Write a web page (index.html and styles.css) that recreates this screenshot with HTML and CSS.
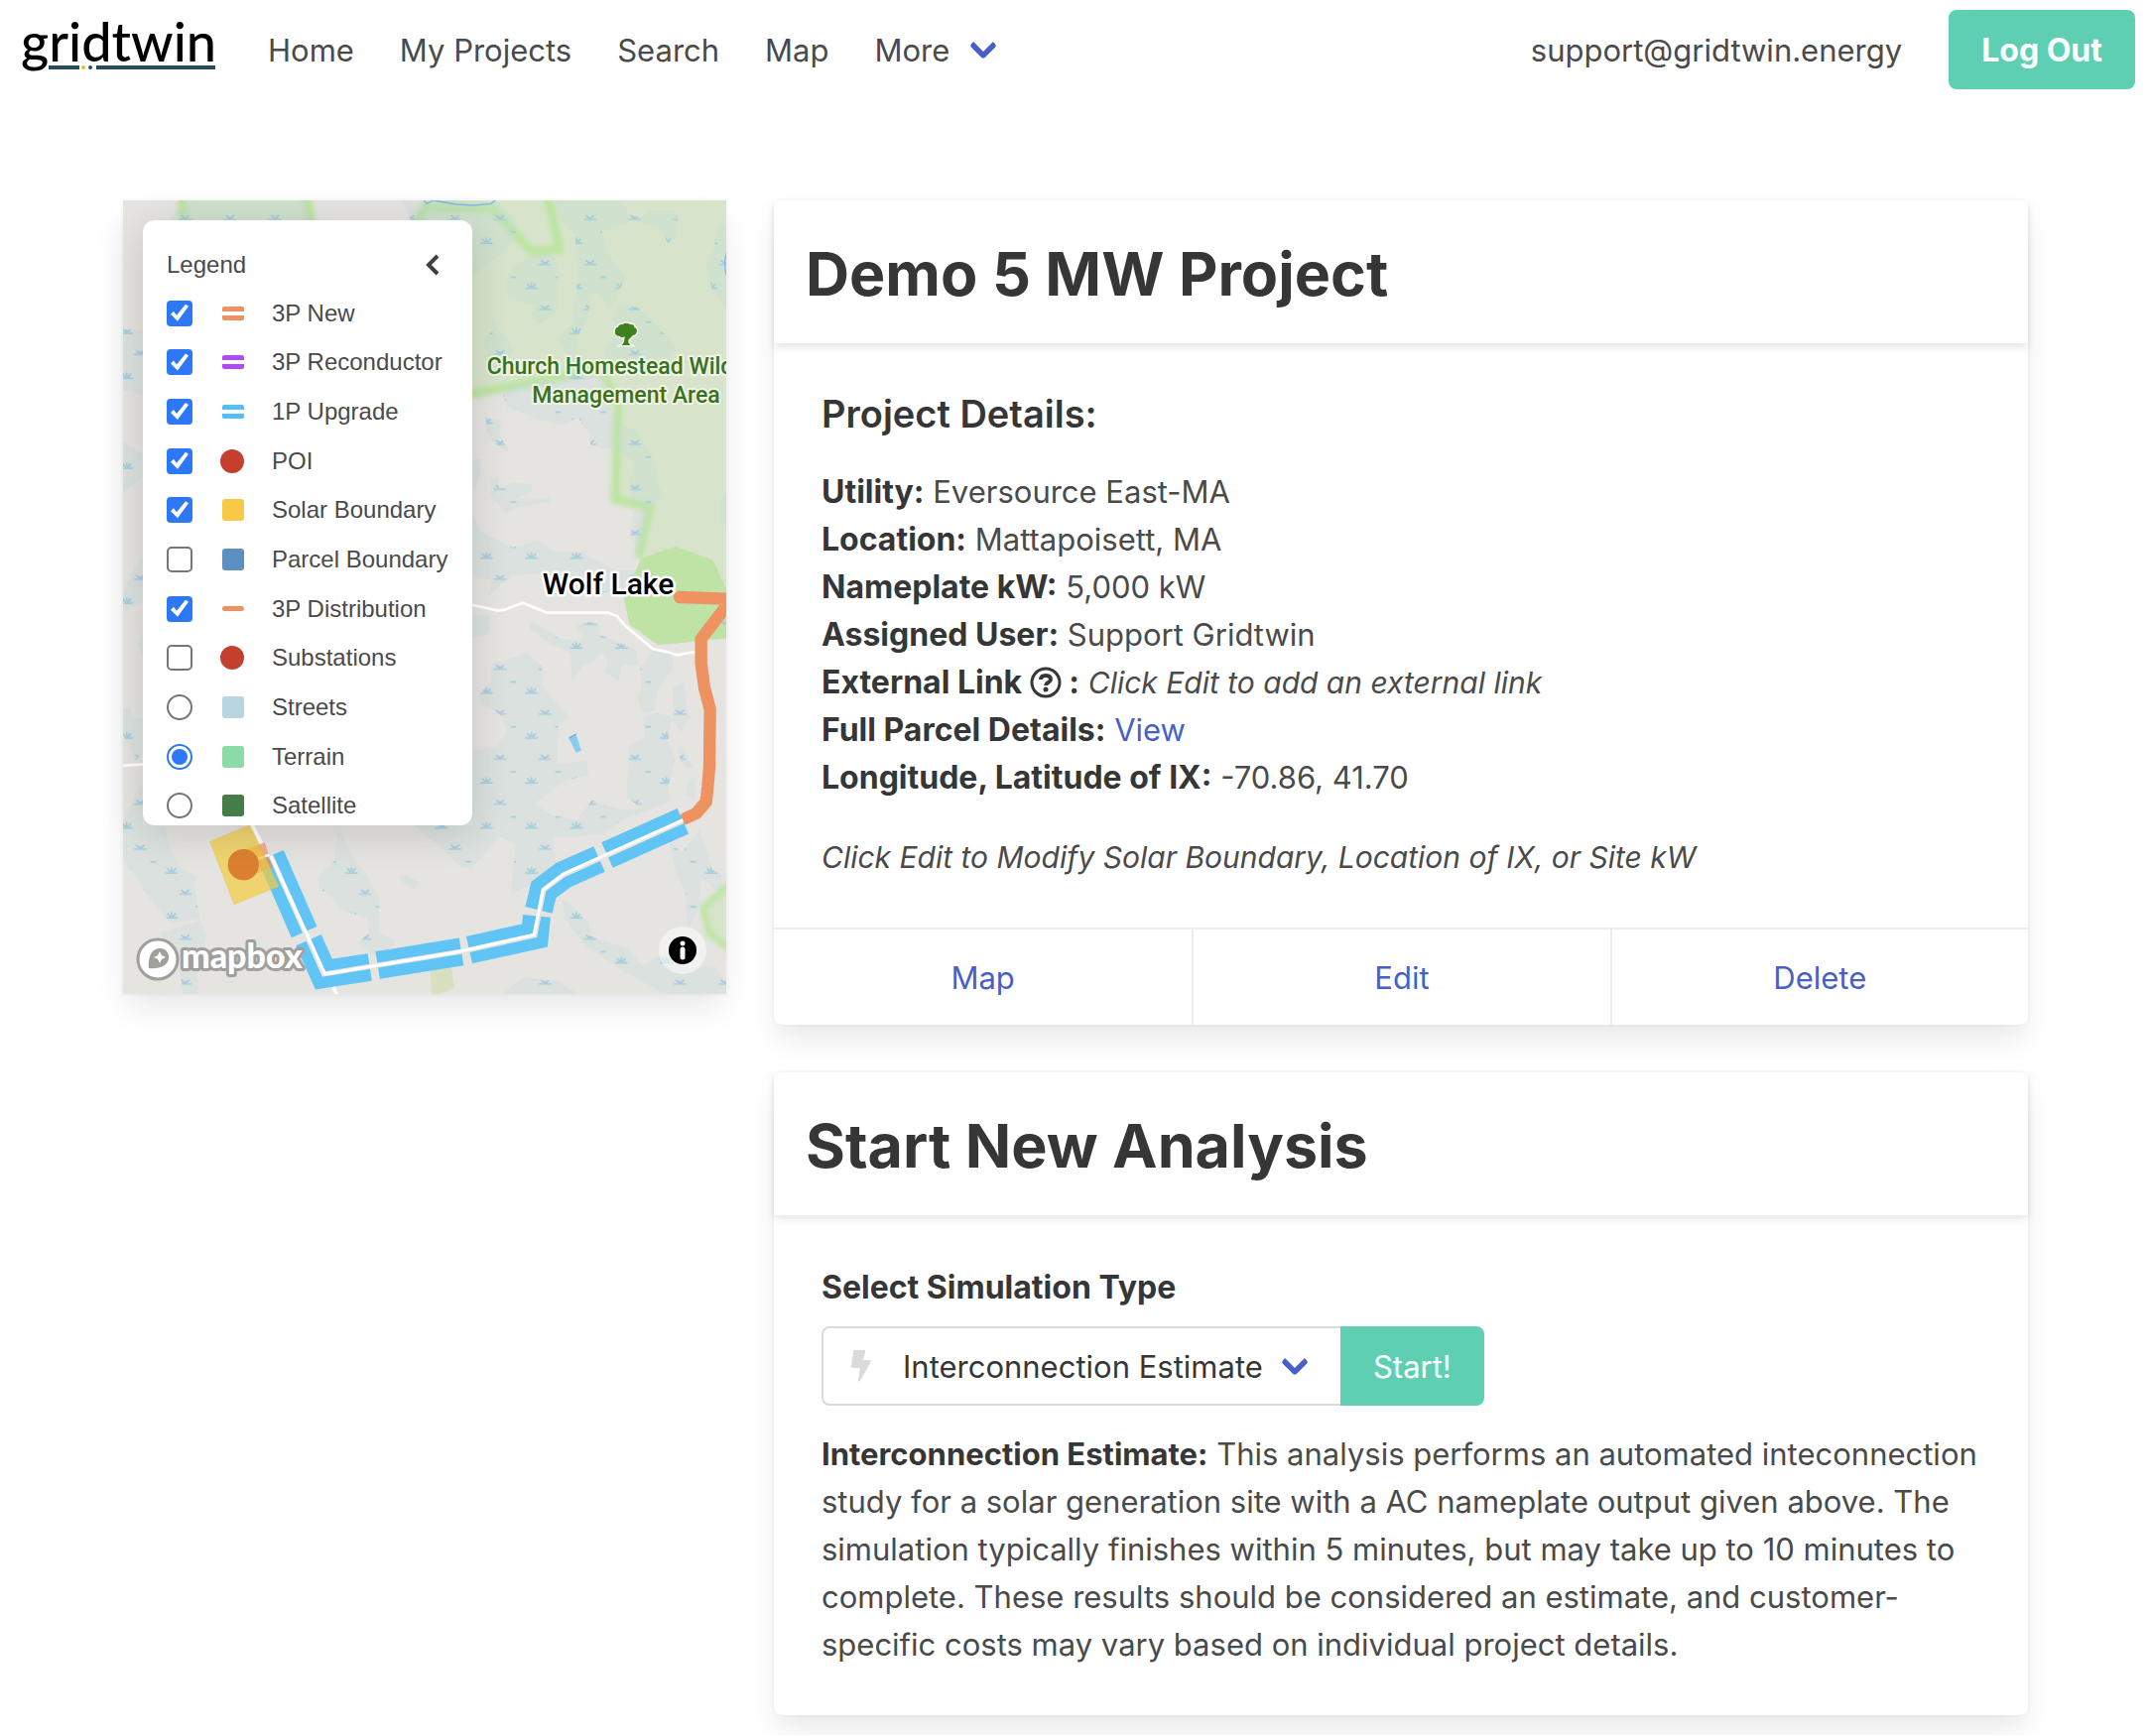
FILE: index.html
```html
<!DOCTYPE html>
<html lang="en">
<head>
<meta charset="utf-8">
<meta name="viewport" content="width=device-width, initial-scale=1">
<title>Demo 5 MW Project - gridtwin</title>
<link rel="stylesheet" href="styles.css">
</head>
<body>
<nav class="navbar" aria-label="Main">
  <a class="brand" href="#" aria-label="gridtwin">
    <svg class="brand-logo" viewBox="0 0 200 60" aria-hidden="true">
      <path d="M27 46h31v4H27zM75 46h120v4H75z" fill="#2b4a5e"/>
      <circle cx="62" cy="48" r="2" fill="#f2b632"/>
      <circle cx="69" cy="48" r="2" fill="#2b4a5e"/>
      <text class="brand-text" x="-1" y="42">gridtwin</text>
    </svg>
  </a>
  <a class="nav-item" href="#">Home</a>
  <a class="nav-item" href="#">My Projects</a>
  <a class="nav-item" href="#">Search</a>
  <a class="nav-item" href="#">Map</a>
  <a class="nav-item nav-more" href="#">More<span class="arrow"></span></a>
  <div class="nav-end">
    <a class="nav-item" href="#">support@gridtwin.energy</a>
    <button class="button button-strong" type="button">Log Out</button>
  </div>
</nav>

<main class="columns">
  <div class="column column-map">
    <section class="map" aria-label="Project map">
      <svg class="map-canvas" viewBox="0 0 608 800" preserveAspectRatio="xMidYMid slice" aria-hidden="true">
        <defs>
          <filter id="soft" x="-10%" y="-10%" width="120%" height="120%"><feGaussianBlur stdDeviation="8"/></filter>
          <pattern id="tufts" width="136" height="136" patternUnits="userSpaceOnUse" x="50" y="50">
            <g fill="none" stroke="#9ccddb" stroke-width="4">
              <path d="M63 44h38M22 116h38M113 82h18"/>
              <path d="M70 31l9 9M94 31l-9 9M82 36v6" stroke="#a3bede"/>
              <path d="M28 102l10 11M54 102l-10 11M41 98v14" stroke="#9cc6dc"/>
            </g>
          </pattern>
          <clipPath id="wet">
            <path d="M48 264V36H120L180 100Q190 160 130 200ZM300 36H500L520 75L560 90L580 66H660L670 95L665 150L640 165L615 120L580 110L540 95L500 110L440 130L460 200L515 270L490 310L475 350L455 360L440 325Q425 310 410 318L395 400L365 450L370 560L300 580L170 590L140 625L155 660L200 680L290 710Q330 722 365 690L405 745V775L440 785H475L480 700L440 560L350 540L340 500L300 455L350 410L365 300L360 140L305 90Z"/>
            <path d="M150 290L170 240Q220 195 290 195L308 230L305 370L270 400L245 410L225 390L240 350L210 345L160 330ZM80 460L105 435L110 390L125 425L150 450L175 490L160 510H100ZM480 380L485 350L550 360L620 430L668 485L640 515H450L455 480L480 440ZM816 110L785 120L780 180L755 240L775 310L816 360Z"/>
            <path d="M490 710L540 730L580 790L605 850L610 900L625 930L585 965L530 945L525 880L540 830L485 790ZM585 970L560 1110L545 1090L525 1050L535 975ZM105 880L125 870L130 910L170 890L225 895L230 915L180 940L280 935L282 948L180 965L150 980L105 930ZM90 695L135 700L130 740L155 790L150 797L110 765L90 730ZM50 820L75 825L70 870L50 905ZM816 920L797 940V1005L816 1020Z"/>
            <path transform="translate(0 1110)" d="M48 -85L170 -25L250 -45L300 -10H380L480 45H545V110H440L400 95L320 70L250 55L170 60L110 110L95 125L110 75L48 60ZM48 185L100 178L98 235L48 245ZM220 205L240 205L310 250L370 260L385 245L360 215L380 200L430 205L438 240L545 285L548 330H500L490 380L450 350L460 320L440 295L415 320L385 330L350 378L345 295L290 270L225 225Z"/>
            <path transform="translate(0 1110)" d="M105 330L215 295L258 335L262 400L340 490L308 510L305 630L395 620L398 665L330 680L235 750L290 785L365 800L410 740L500 770L560 765L517 730L520 580L568 545L565 485L605 475L650 490L640 560L660 620L640 700L645 745L500 800L450 840L380 850H290L300 930L220 1000L165 1020L180 870L130 850L60 930L0 900V830L48 815V590L120 580L155 530L130 480L75 450L70 420L105 380ZM555 340L590 290H655V340L610 400L600 470L560 475L548 430L560 400Z"/>
            <path transform="translate(0 1110)" d="M655 400L690 380L695 460L705 490L680 535L655 500ZM665 590L680 570L715 640H690ZM700 680L725 670L720 740L695 720ZM640 850L680 900L735 830L775 950L800 960L805 1010H780L740 970L735 1060L700 1130L690 1010L665 960ZM320 1040L350 1060L400 1110L405 1150L520 1190L560 1240L640 1200L700 1250L780 1240L816 1290V1326H650L620 1320L510 1260L390 1180L330 1100ZM145 1320L205 1275L310 1290L370 1326H150ZM800 90H820V230L800 200Z"/>
            <path transform="translate(-1050 1830)" d="M42 90L170 100L180 160L215 225L262 250L260 290L275 380L185 390L120 315L70 235L42 200ZM155 420L275 385L295 430L270 520L268 606H225L210 520ZM635 250L680 205L690 120L700 118L735 190L775 240L818 315V425L860 440L862 460L800 490L755 450L785 420L780 375L705 355L670 310L632 285ZM925 96H1140V140L1120 145V190L1095 230L1060 220L1010 165L960 130ZM878 245H900L938 270L920 290L880 260Z"/>
            <path transform="translate(-1050 0)" d="M42 425L102 430V625L60 610L42 615ZM42 765L102 805V870L42 920ZM228 36H595L610 96H170L228 60ZM885 36H1100V96H912ZM1098 820H1125L1110 910L1098 900Z"/>
            <path transform="translate(-1050 960)" d="M70 200L102 150V290L42 320V270ZM102 380L88 420L102 460ZM42 610L65 615L70 640L102 645V750L80 770L42 690ZM42 960L95 840L102 850V966H42ZM1098 20L1140 120V185L1098 110ZM1098 330L1140 340V390L1098 395Z"/>
          </clipPath>
        </defs>
        <rect width="608" height="800" fill="#e5e4e1"/>
        <g transform="translate(336 -12) scale(.33333)">
          <!-- conservation land -->
          <path d="M-825 20H-450L-430 150H-825ZM-90 20L-140 150V660L48 622L440 545L488 660L480 940L585 965L550 1120L600 1240H820V20Z" fill="#d7e4cb"/>
          <path d="M-828 20V150M-452 20L-430 150M-130 120L-95 55L110 62L228 192L312 182L275 20M-60 650L48 622L440 545L488 660L480 940L585 965L550 1115" fill="none" stroke="#bce4a0" stroke-width="26" filter="url(#soft)"/>
          <path d="M840 2090L745 2175L765 2255L840 2310Z" fill="#d7e4cb" stroke="#bce4a0" stroke-width="18" filter="url(#soft)"/>
          <path d="M-82 2325L-20 2320L-6 2417L-50 2436H-75Z" fill="#d9e0bf"/>
          <path d="M560 1118L662 1082L775 1123L830 1240L822 1360L610 1381L523 1318L505 1230Z" fill="#bfe3a4"/>
          <!-- wetlands -->
          <g clip-path="url(#wet)">
            <rect x="-1010" y="36" width="1830" height="2400" fill="#bfdcd8" opacity=".28"/>
            <rect x="-1010" y="36" width="1830" height="2400" fill="url(#tufts)"/>
          </g>
          <path d="M-98 36L-90 46L-70 36L0 48L50 51L105 46L118 36M820 185Q804 230 820 272" fill="none" stroke="#86b3ea" stroke-width="4"/>
          <path d="M340 1662L362 1650L378 1700L362 1706Z" fill="#8accee"/>
          <path d="M340 1662L362 1650" stroke="#789fe0" stroke-width="4"/>
          <!-- roads -->
          <g fill="none" stroke="#fff" stroke-width="8">
            <path d="M0 1250L50 1260L125 1277L150 1273L200 1253L275 1283H460L487 1294L510 1322L595 1393L640 1402L665 1411L710 1403H724M-1010 1745L-945 1742"/>
            <path d="M-625 1910L-450 2260L-360 2440" stroke-width="11"/>
          </g>
          <!-- three-phase line -->
          <path d="M675 1236L822 1241M830 1245L740 1362V1435L750 1510L767 1575L765 1750L760 1810L755 1855L725 1890L692 1905" fill="none" stroke="#ee9262" stroke-width="37" stroke-linecap="round"/>
          <!-- single-phase upgrade -->
          <g fill="none" stroke="#60c4f5" stroke-width="84">
            <path d="M456 2016L685 1913M432 2028L324 2076L264 2121L249 2182M243 2200L237 2259L39 2303M-238 2349L15 2308M-262 2355L-401 2376L-447 2273M-460 2249L-561 2018"/>
          </g>
          <path d="M685 1913L324 2076L264 2121L237 2259L14 2308L-401 2376L-561 2018" fill="none" stroke="#e5e4e1" stroke-width="15"/>
          <path d="M685 1910L324 2073L262 2121L235 2257L14 2307L-397 2376L-561 2018" fill="none" stroke="#fff" stroke-width="9"/>
          <!-- solar site and interconnection point -->
          <path d="M-640 2000L-580 1978L-568 2012L-620 2030ZM-610 2075L-555 2052L-570 2020L-620 2040Z" fill="#ee8a5e" opacity=".7"/>
          <path d="M-745 1975L-625 1925L-537 2110L-672 2165Z" fill="#f5cc3c" opacity=".68" stroke="#f0c030" stroke-width="2"/>
          <circle cx="-644" cy="2045" r="47" fill="#dc8030"/>
          <!-- park marker -->
          <path d="M499 474Q509 468 509 448Q500 453 492 446Q478 446 480 431Q480 420 489 419Q491 410 503 411Q514 404 525 411Q538 410 538 420Q548 424 545 434Q543 443 534 444L520 458Q519 469 527 474Z" fill="#40801f" stroke="#f2f6ec" stroke-width="9" paint-order="stroke"/>
        </g>
        <text class="place-park" x="507" y="175">Church Homestead Wildlife</text>
        <text class="place-park" x="507" y="204">Management Area</text>
        <text class="place-lake" x="489" y="397">Wolf Lake</text>
        <circle cx="35" cy="765" r="20" fill="#fff" stroke="#a09f9c" stroke-width="3"/>
        <path d="M26 774C25 764 28 754 37 754C43 754 46 758 46 763C46 772 36 775 26 774Z" fill="#a09f9c"/>
        <path d="M37 757L39 761L43 763L39 765L37 769L35 765L31 763L35 761Z" fill="#fff"/>
        <text class="map-logo" x="59" y="774">mapbox</text>
      </svg>

      <form class="legend">
        <div class="legend-head">
          <span>Legend</span>
          <button class="legend-toggle" type="button" aria-label="Collapse legend">
            <svg width="14" height="22" viewBox="0 0 14 22" aria-hidden="true"><path d="M12 2L3 11L12 20" fill="none" stroke="#3f3f3f" stroke-width="4"/></svg>
          </button>
        </div>
        <div class="legend-list">
          <label class="legend-row"><input class="tick" type="checkbox" checked><span class="key key-double orange"></span>3P New</label>
          <label class="legend-row"><input class="tick" type="checkbox" checked><span class="key key-double purple"></span>3P Reconductor</label>
          <label class="legend-row"><input class="tick" type="checkbox" checked><span class="key key-double sky"></span>1P Upgrade</label>
          <label class="legend-row"><input class="tick" type="checkbox" checked><span class="key key-dot"></span>POI</label>
          <label class="legend-row"><input class="tick" type="checkbox" checked><span class="key key-area yellow"></span>Solar Boundary</label>
          <label class="legend-row"><input class="tick" type="checkbox"><span class="key key-area steel"></span>Parcel Boundary</label>
          <label class="legend-row"><input class="tick" type="checkbox" checked><span class="key key-line orange"></span>3P Distribution</label>
          <label class="legend-row"><input class="tick" type="checkbox"><span class="key key-dot"></span>Substations</label>
          <label class="legend-row"><input class="pick" type="radio" name="base"><span class="key key-area pale"></span>Streets</label>
          <label class="legend-row"><input class="pick" type="radio" name="base" checked><span class="key key-area mint"></span>Terrain</label>
          <label class="legend-row"><input class="pick" type="radio" name="base"><span class="key key-area forest"></span>Satellite</label>
        </div>
      </form>

      <button class="map-info" type="button" aria-label="Map attribution">
        <svg width="48" height="48" viewBox="0 0 48 48" aria-hidden="true"><circle cx="24" cy="24" r="14" fill="#000"/><circle cx="24" cy="17" r="2.5" fill="#fff"/><path d="M24 23v8" stroke="#fff" stroke-width="5" stroke-linecap="round"/></svg>
      </button>
    </section>
  </div>

  <div class="column column-main">
    <article class="card">
      <header class="card-header"><h1 class="card-title">Demo 5 MW Project</h1></header>
      <div class="card-content">
        <h2 class="subtitle">Project Details:</h2>
        <ul class="details">
          <li><strong>Utility:</strong> Eversource East-MA</li>
          <li><strong>Location:</strong> Mattapoisett, MA</li>
          <li><strong>Nameplate kW:</strong> 5,000 kW</li>
          <li><strong>Assigned User:</strong> Support Gridtwin</li>
          <li><strong>External Link <svg class="help" viewBox="0 0 32 32" aria-hidden="true"><circle cx="16" cy="16" r="14" fill="none" stroke="currentColor" stroke-width="3"/><path d="M11 13C11 10 13 9 16 9C19 9 21 10 21 13C21 16 16 16 16 19" fill="none" stroke="currentColor" stroke-width="4"/><circle cx="16" cy="23" r="2.5" fill="currentColor"/></svg> :</strong> <em>Click Edit to add an external link</em></li>
          <li><strong>Full Parcel Details:</strong> <a href="#">View</a></li>
          <li><strong>Longitude, Latitude of IX:</strong> -70.86, 41.70</li>
        </ul>
        <p><em>Click Edit to Modify Solar Boundary, Location of IX, or Site kW</em></p>
      </div>
      <footer class="card-footer">
        <a href="#">Map</a>
        <a href="#">Edit</a>
        <a href="#">Delete</a>
      </footer>
    </article>

    <article class="card">
      <header class="card-header"><h2 class="card-title">Start New Analysis</h2></header>
      <form class="card-content">
        <label class="label" for="simulation">Select Simulation Type</label>
        <div class="addons">
          <div class="select">
            <svg class="bolt" width="20" height="32" viewBox="0 0 20 32" aria-hidden="true"><path d="M3 0H13Q15 0 14 2L12 10H18Q21 10 19 13L9 31Q7 33 7 30L9 18H2Q0 18 0 16L2 2Q2 0 3 0Z" fill="#dbdbdb"/></svg>
            <select id="simulation"><option>Interconnection Estimate</option></select>
            <span class="arrow"></span>
          </div>
          <button class="button button-end" type="button">Start!</button>
        </div>
        <p><strong>Interconnection Estimate:</strong> This analysis performs an automated inteconnection study for a solar generation site with a AC nameplate output given above. The simulation typically finishes within 5 minutes, but may take up to 10 minutes to complete. These results should be considered an estimate, and customer-specific costs may vary based on individual project details.</p>
      </form>
    </article>
  </div>
</main>
</body>
</html>
```
FILE: styles.css
```css
* { box-sizing: border-box; }

body {
  margin: 0;
  background: #fff;
  color: #4a4a4a;
  font: 31px/48px Inter, sans-serif;
}

h1, h2, p, ul { margin: 0; padding: 0; }
ul { list-style: none; }
a { color: #485fc7; text-decoration: none; }
strong { color: #363636; font-weight: 700; }
em { font-size: 30px; }
button, select { font: inherit; margin: 0; }

/* navigation */
.navbar {
  display: flex;
  align-items: center;
  padding: 10px 16px 10px 22px;
  min-height: 100px;
}
.brand { display: block; height: 60px; margin-right: 25px; }
.brand-logo { display: block; width: 200px; height: 60px; overflow: visible; }
.brand-text { font: 500 54px Lato, sans-serif; fill: #000; }
.nav-item { padding: 2px 23px 0; color: #4a4a4a; white-space: nowrap; }
.nav-more { position: relative; padding-right: 72px; }
.nav-end { display: flex; align-items: center; gap: 24px; margin-left: auto; }

.arrow {
  position: absolute;
  top: 50%;
  right: 36px;
  width: 20px;
  height: 20px;
  margin-top: -14px;
  border: 6px solid #485fc7;
  border-top: 0;
  border-right: 0;
  border-radius: 4px;
  transform: rotate(-45deg);
  pointer-events: none;
}
.nav-more .arrow { right: 28px; }

.button {
  height: 80px;
  padding: 2px 33px 0;
  border: 0;
  border-radius: 8px;
  background: #5ecfb3;
  color: #fff;
  white-space: nowrap;
}
.button-strong { font-size: 32px; font-weight: 700; }
.button-end { border-radius: 0 8px 8px 0; }

/* page columns */
.columns {
  display: flex;
  max-width: 1968px;
  margin: 0 auto;
  padding-top: 102px;
}
.column { min-width: 0; padding: 0 24px; }
.column-map { width: 33.3333%; }
.column-main {
  display: flex;
  flex-direction: column;
  gap: 48px;
  width: 66.6667%;
  padding-bottom: 20px;
}

/* map */
.map {
  position: relative;
  height: 800px;
  box-shadow: 0 16px 32px -4px rgba(10, 10, 10, .1), 0 0 0 2px rgba(10, 10, 10, .02);
}
.map-canvas { display: block; width: 100%; height: 100%; }
.place-park, .place-lake { font-family: Roboto, sans-serif; font-weight: 500; text-anchor: middle; paint-order: stroke; stroke-linejoin: round; }
.place-park { font-size: 23px; fill: #3a701e; stroke: #eef4e6; stroke-width: 4px; }
.place-lake { font-size: 30px; fill: #000; stroke: #fff; stroke-width: 5px; }
.map-logo { font: 900 34px Lato, sans-serif; fill: #fff; stroke: #a09f9c; stroke-width: 6px; stroke-linejoin: round; paint-order: stroke; }
.map-info {
  position: absolute;
  right: 20px;
  bottom: 20px;
  width: 48px;
  height: 48px;
  padding: 0;
  border: 0;
  border-radius: 50%;
  background: rgba(255, 255, 255, .5);
}
.map-info svg { display: block; }

/* legend */
.legend {
  position: absolute;
  top: 20px;
  left: 20px;
  width: 332px;
  height: 610px;
  padding: 21px 24px 0;
  overflow: hidden;
  border-radius: 12px;
  background: #fff;
  box-shadow: 0 8px 40px rgba(0, 0, 0, .14);
  font: 24px/48px "Liberation Sans", sans-serif;
}
.legend-head { display: flex; justify-content: space-between; align-items: center; height: 48px; padding-right: 9px; }
.legend-toggle { display: flex; padding: 0; border: 0; background: none; }
.legend-list { display: grid; grid-auto-rows: 1fr; height: 546px; }
.legend-row { display: flex; align-items: center; white-space: nowrap; }

.tick, .pick {
  appearance: none;
  flex: none;
  width: 26px;
  height: 26px;
  margin: 0;
  border: 2px solid #767676;
  border-radius: 5px;
  background: #fff;
}
.tick:checked { border: 0; border-radius: 4px; background: #2d78f7; }
.tick:checked::before {
  content: "";
  display: block;
  height: 26px;
  background: #fff;
  clip-path: polygon(4px 14px, 7px 11px, 10px 15px, 19px 4px, 22px 6px, 11px 21px);
}
.pick { display: grid; place-items: center; border-radius: 50%; }
.pick:checked { border-color: #2d78f7; }
.pick:checked::before { content: ""; width: 16px; height: 16px; border-radius: 50%; background: #2d78f7; }

.key { flex: none; width: 22px; height: 22px; margin: 0 28px 0 30px; border-radius: 3px; }
.key-double { height: 14px; border: solid; border-width: 5px 0; border-radius: 2px; }
.key-line { height: 5px; background: currentColor; }
.key-dot { width: 24px; height: 24px; margin: 0 28px; border-radius: 50%; background: #c43f2d; }
.key-area { background: currentColor; }
/* the swatch colour must not reach the label text */
.orange { color: #ee9262; }
.purple { color: #b14cf2; }
.sky { color: #55bdfa; }
.yellow { color: #f7c945; }
.steel { color: #5b90c0; }
.pale { color: #b8d5e0; }
.mint { color: #8adba8; }
.forest { color: #447d48; }

/* cards */
.card {
  border-radius: 8px;
  background: #fff;
  box-shadow: 0 16px 32px -4px rgba(10, 10, 10, .1), 0 0 0 2px rgba(10, 10, 10, .02);
}
.card-header { padding: 26px 32px 22px; box-shadow: 0 4px 8px rgba(10, 10, 10, .1); }
.card-title { color: #363636; font-size: 61px; line-height: 96px; font-weight: 700; }
.card-content { padding: 49px 48px 47px; }
.subtitle { margin-bottom: 32px; color: #363636; font-size: 38px; line-height: 45px; font-weight: 600; }
.details { margin-bottom: 32px; }
.details strong { font-size: 32px; }
.help { width: 32px; height: 32px; vertical-align: -5px; }
.card-footer { display: grid; grid-template-columns: repeat(3, 1fr); border-top: 2px solid #ededed; }
.card-footer a { padding: 25px 24px 23px; text-align: center; }
.card-footer a + a { border-left: 2px solid #ededed; }

/* analysis form */
.label { display: block; margin-bottom: 15px; color: #363636; font-size: 32px; font-weight: 700; }
.addons { display: flex; margin-bottom: 25px; }
.select { position: relative; }
.select select {
  appearance: none;
  height: 80px;
  padding: 2px 78px 0 80px;
  border: 2px solid #dbdbdb;
  border-right: 0;
  border-radius: 8px 0 0 8px;
  background: #fff;
  color: #363636;
}
.bolt { position: absolute; top: 24px; left: 30px; }
```
